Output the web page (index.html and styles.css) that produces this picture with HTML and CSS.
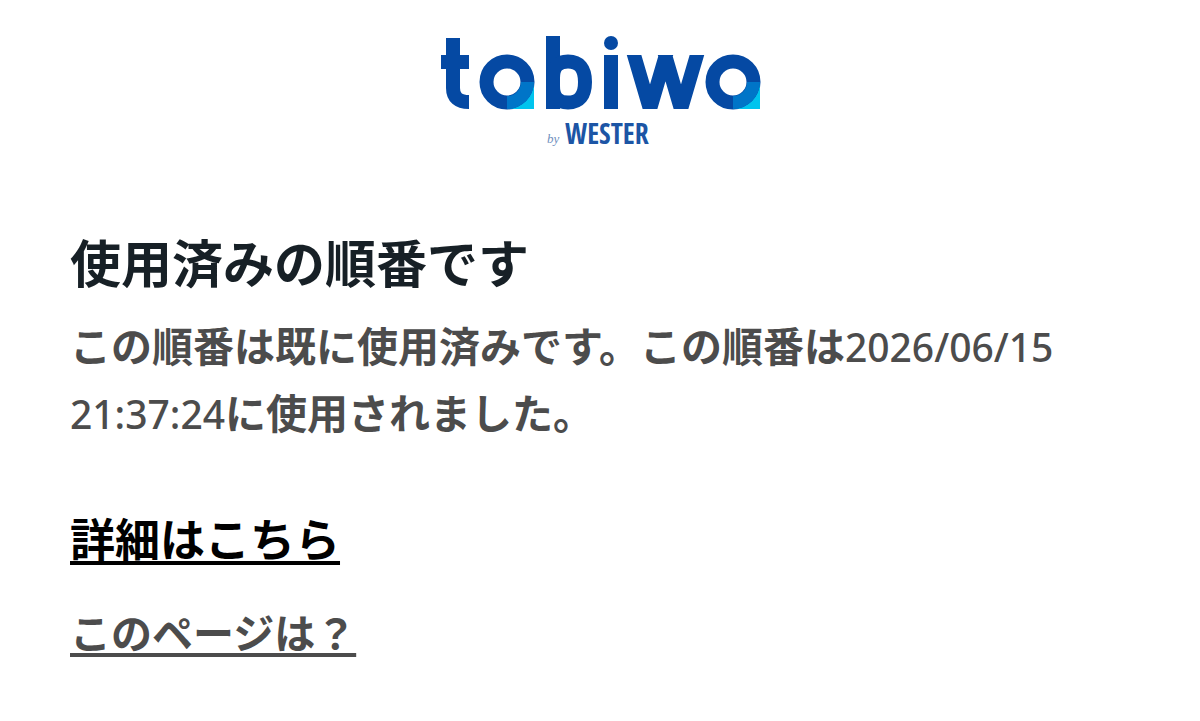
FILE: index.html
```html
<!DOCTYPE html>
<html lang="ja">
<head>
<meta charset="utf-8">
<meta name="viewport" content="width=device-width, initial-scale=1">
<title>tabiwa by WESTER</title>
<link rel="stylesheet" href="styles.css">
</head>
<body>
<header class="header">
  <svg class="logo" viewBox="0 0 321 114" role="img" aria-label="tabiwa by WESTER">
    <g class="stroke">
      <path d="M13 2V52Q13 66 29 66M1 26H29"/>
      <circle cx="67" cy="46" r="20.5"/>
      <path d="M113 0V73"/>
      <path d="M113 42Q113 25.5 128 25.5Q145 25.5 145 46Q145 66.5 128 66.5Q113 66.5 113 50"/>
      <path d="M171 19V73"/>
      <circle cx="293" cy="46" r="20.5"/>
    </g>
    <svg x="184" y="19" width="82" height="54" viewBox="0 0 82 54">
      <path class="stroke" d="M8-7L28 61M24 61L44-7M39-7L59 61M55 61L75-7"/>
    </svg>
    <circle class="dot" cx="171" cy="7" r="7"/>
    <path class="corner" d="M94 46V73H67A27 27 0 0 0 94 46ZM320 46V73H293A27 27 0 0 0 320 46Z"/>
    <path class="overlap" d="M94 46A27 27 0 0 1 67 73V60A14 14 0 0 0 81 46ZM320 46A27 27 0 0 1 293 73V60A14 14 0 0 0 307 46Z"/>
    <text class="by" x="107" y="107">by</text>
    <text class="wester" x="125" y="108">WESTER</text>
  </svg>
</header>
<main class="content">
  <h1 class="title">使用済みの順番です</h1>
  <p class="message">この順番は既に使用済みです。この順番は<span class="stamp">2026/06/15 21:37:24</span>に使用されました。</p>
  <a class="details" href="#details">詳細はこちら</a>
  <a class="about" href="#about">このページは？</a>
</main>
</body>
</html>
```
FILE: styles.css
```css
body {
  margin: 0;
  background: #fff;
  color: #4c4c4c;
  font-family: "Noto Sans CJK JP", sans-serif;
}

.header {
  display: flex;
  justify-content: center;
  padding-top: 36px;
}

.logo {
  display: block;
  width: 321px;
  overflow: visible;
}

.stroke {
  fill: none;
  stroke: #0549a3;
  stroke-width: 14px;
}

.dot {
  fill: #0549a3;
}

.corner {
  fill: #00c4ee;
}

.overlap {
  fill: #0075c8;
}

.by {
  fill: #6f8fbd;
  font: italic 13px "Liberation Serif", serif;
}

.wester {
  fill: #1c55a5;
  font: bold 28px "Liberation Sans Narrow", "Open Sans Condensed", "Roboto Condensed", "Liberation Sans", sans-serif;
}

.content {
  display: flex;
  flex-direction: column;
  align-items: flex-start;
  padding: 73px 70px 32px;
}

.title {
  margin: 0;
  color: #172026;
  font-size: 51px;
  font-weight: 700;
  line-height: 76px;
}

.message {
  margin: 12px 0 60px;
  font-size: 41px;
  font-weight: 700;
  line-height: 67px;
}

.stamp {
  font-family: "Noto Sans", sans-serif;
  font-size: 39px;
  font-weight: 500;
  line-height: 1;
}

.details,
.about {
  text-decoration-thickness: 4px;
  text-underline-offset: 4px;
  text-decoration-skip-ink: none;
}

.details {
  color: #000;
  font-size: 45px;
  font-weight: 700;
  line-height: 66px;
}

.about {
  margin-top: 30px;
  color: inherit;
  font-size: 41px;
  font-weight: 700;
  line-height: 60px;
}
```
